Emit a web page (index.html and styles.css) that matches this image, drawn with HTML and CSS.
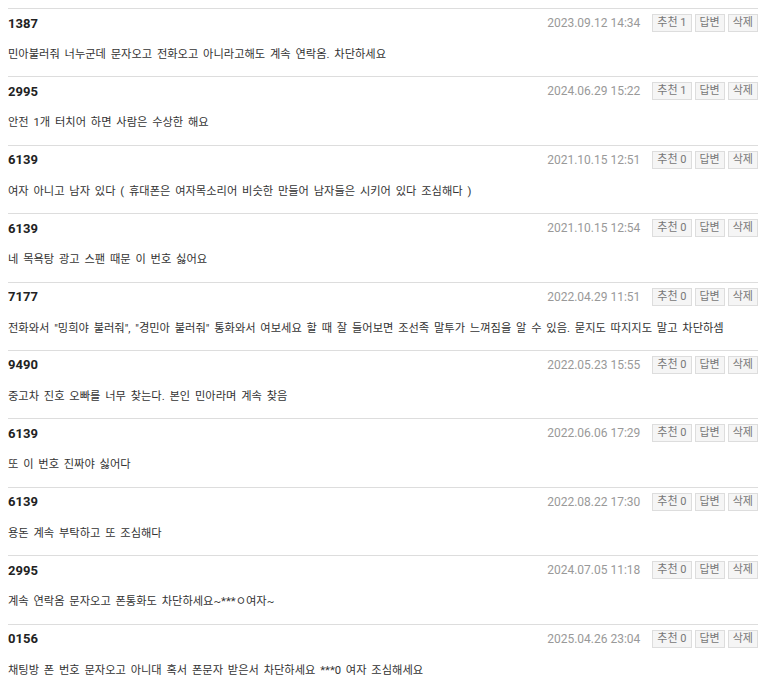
FILE: index.html
```html
<html>
    <head>
        <meta charset="utf-8">
        <link rel="stylesheet" href="styles.css">
    </head>
    <body>
        <div class="comments">
            <div class="comment">
                <div class="head"><span class="name">1387</span><span class="date">2023.09.12 14:34</span><span class="btn">추천 1</span><span class="btn">답변</span><span class="btn">삭제</span></div>
                <div class="msg">민아불러줘 너누군데 문자오고 전화오고 아니라고해도 계속 연락옴. 차단하세요</div>
            </div>
            <div class="comment">
                <div class="head"><span class="name">2995</span><span class="date">2024.06.29 15:22</span><span class="btn">추천 1</span><span class="btn">답변</span><span class="btn">삭제</span></div>
                <div class="msg">안전 1개 터치어 하면 사람은 수상한 해요</div>
            </div>
            <div class="comment">
                <div class="head"><span class="name">6139</span><span class="date">2021.10.15 12:51</span><span class="btn">추천 0</span><span class="btn">답변</span><span class="btn">삭제</span></div>
                <div class="msg">여자 아니고 남자 있다 ( 휴대폰은 여자목소리어 비슷한 만들어 남자들은 시키어 있다 조심해다 )</div>
            </div>
            <div class="comment">
                <div class="head"><span class="name">6139</span><span class="date">2021.10.15 12:54</span><span class="btn">추천 0</span><span class="btn">답변</span><span class="btn">삭제</span></div>
                <div class="msg">네 목욕탕 광고 스팬 때문 이 번호 싫어요</div>
            </div>
            <div class="comment">
                <div class="head"><span class="name">7177</span><span class="date">2022.04.29 11:51</span><span class="btn">추천 0</span><span class="btn">답변</span><span class="btn">삭제</span></div>
                <div class="msg">전화와서 "밍희야 불러줘", "경민아 불러줘" 통화와서 여보세요 할 때 잘 들어보면 조선족 말투가 느껴짐을 알 수 있음. 묻지도 따지지도 말고 차단하셈</div>
            </div>
            <div class="comment">
                <div class="head"><span class="name">9490</span><span class="date">2022.05.23 15:55</span><span class="btn">추천 0</span><span class="btn">답변</span><span class="btn">삭제</span></div>
                <div class="msg">중고차 진호 오빠를 너무 찾는다. 본인 민아라며 계속 찾음</div>
            </div>
            <div class="comment">
                <div class="head"><span class="name">6139</span><span class="date">2022.06.06 17:29</span><span class="btn">추천 0</span><span class="btn">답변</span><span class="btn">삭제</span></div>
                <div class="msg">또 이 번호 진짜야 싫어다</div>
            </div>
            <div class="comment">
                <div class="head"><span class="name">6139</span><span class="date">2022.08.22 17:30</span><span class="btn">추천 0</span><span class="btn">답변</span><span class="btn">삭제</span></div>
                <div class="msg">용돈 계속 부탁하고 또 조심해다</div>
            </div>
            <div class="comment">
                <div class="head"><span class="name">2995</span><span class="date">2024.07.05 11:18</span><span class="btn">추천 0</span><span class="btn">답변</span><span class="btn">삭제</span></div>
                <div class="msg">계속 연락옴 문자오고 폰통화도 차단하세요~***ㅇ여자~</div>
            </div>
            <div class="comment">
                <div class="head"><span class="name">0156</span><span class="date">2025.04.26 23:04</span><span class="btn">추천 0</span><span class="btn">답변</span><span class="btn">삭제</span></div>
                <div class="msg">채팅방 폰 번호 문자오고 아니대 혹서 폰문자 받은서 차단하세요 ***0 여자 조심해세요</div>
            </div>
        </div>
    </body>
</html>
```

FILE: styles.css
```css
body
{
    margin: 8px;
    background: #fff;
    color: #333;
    font-family: Roboto, "Noto Sans CJK KR", sans-serif;
}
.comment
{
    border-top: 1px solid #ddd;
    padding: 5px 0 11.4px 0;
}
.head
{
    display: flex;
    align-items: center;
    height: 18px;
}
.name
{
    flex: 1;
    font-weight: bold;
    font-size: 13px;
    color: #222;
}
.date
{
    font-size: 12px;
    color: #999;
    margin-right: 9px;
}
.btn
{
    display: inline-block;
    box-sizing: border-box;
    height: 18px;
    line-height: 16px;
    padding: 0 4px;
    margin-left: 3px;
    border: 1px solid #ddd;
    background: #f5f5f5;
    color: #777;
    font-size: 11px;
}
.msg
{
    margin-top: 13px;
    line-height: 20px;
    font-size: 11.25px;
    word-spacing: 2px;
    color: #333;
}
```
